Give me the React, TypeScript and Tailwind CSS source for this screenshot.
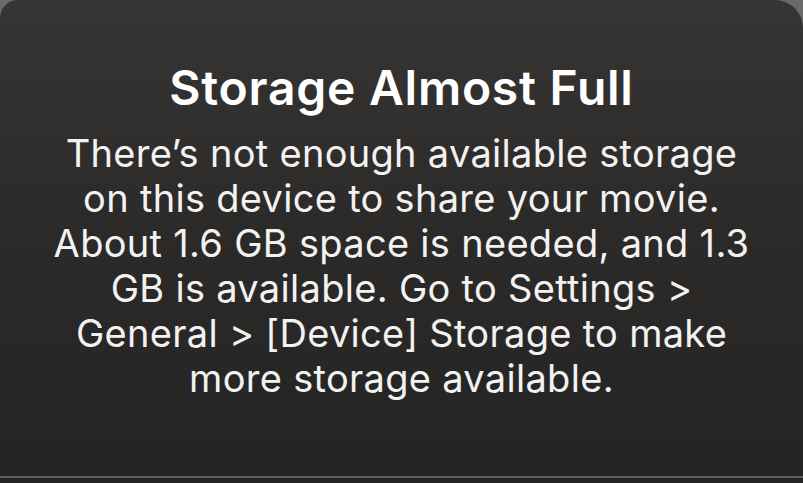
const LINES = [
  "There’s not enough available storage",
  "on this device to share your movie.",
  "About 1.6 GB space is needed, and 1.3",
  "GB is available. Go to Settings >",
  "General > [Device] Storage to make",
  "more storage available.",
];

export default function App() {
  return (
    <div className="h-[483px] w-[803px] overflow-hidden bg-[#6a6a6a]" style={{ fontFamily: "Inter, 'Liberation Sans', sans-serif" }}>
      <div className="flex h-[476px] flex-col items-center rounded-tl-[18px] rounded-tr-[28px] bg-gradient-to-b from-[#373533] via-[#2c2a29] to-[#242424] pt-[62px] text-center text-white">
        <h1 className="text-[48px] font-semibold leading-[52px] tracking-[0.75px]">Storage Almost Full</h1>
        <p className="mt-[17px] text-[38px] leading-[45px] tracking-[0.3px] text-[#f2f2f2]">
          {LINES.map((l) => (
            <span key={l} className="block whitespace-nowrap">{l}</span>
          ))}
        </p>
      </div>
      <div className="h-[2px] bg-[#5a5a5a]" />
      <div className="h-[5px] bg-[#242424]" />
    </div>
  );
}
